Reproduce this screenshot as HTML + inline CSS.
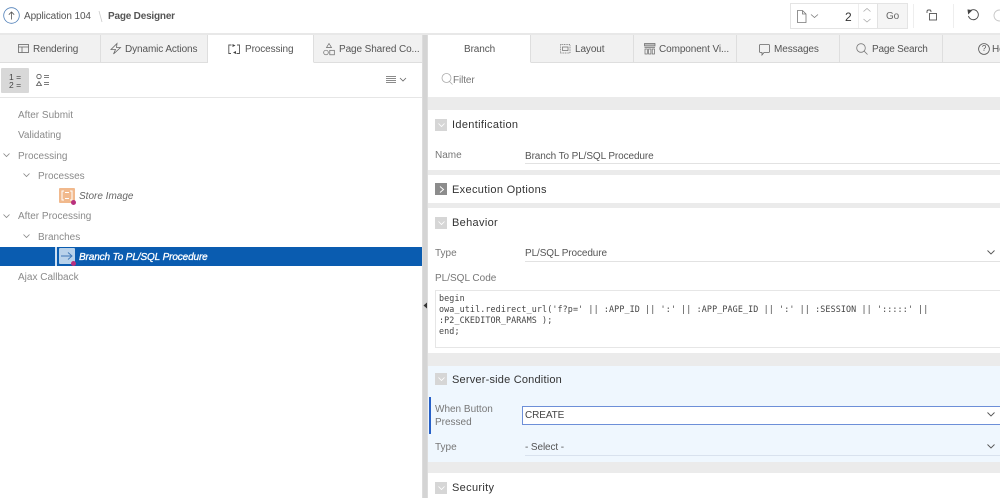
<!DOCTYPE html>
<html><head><meta charset="utf-8"><style>
html,body{margin:0;padding:0;background:#fff;width:1000px;height:498px;overflow:hidden}
#r{position:relative;width:1000px;height:498px;overflow:hidden;font-family:"Liberation Sans",sans-serif;font-size:10px;color:#444;filter:blur(.25px);letter-spacing:-.1px}
.a{position:absolute}
.t{position:absolute;white-space:nowrap;line-height:12px}
.tab{position:absolute;top:35px;height:27px;background:#f1f1f1;border-right:1px solid #dedede;border-bottom:1px solid #dedede}
.w{background:#fff;border-bottom:1px solid #fff}
.g{position:absolute;background:#ebebeb}
.tr{color:#8a8a8a;font-size:10px;letter-spacing:0}
.h{font-size:11px;color:#333;letter-spacing:.33px}
.b{position:absolute;left:435px;width:12px;height:12px;background:#d6d6d6}
.lb{color:#777;letter-spacing:0}
.v{color:#555;letter-spacing:-.1px}
.l{position:absolute;left:525px;width:475px;height:1px;background:#e2e2e2}
svg{position:absolute;overflow:visible;fill:none}
</style></head><body><div id="r">
<!-- header -->
<div class="a" style="left:0;top:33px;width:1000px;height:2px;background:#e8e8e8"></div>
<svg style="left:3px;top:7px" width="17" height="17" stroke="#4f7fb8" stroke-width=".8"><circle cx="8.500" cy="8.500" r="7.800"/><path d="M8.500 12.500V5M5.800 7.700L8.500 5l2.700 2.700" stroke="#555"/></svg>
<div class="t" style="left:24px;top:11px;color:#555">Application 104</div>
<svg style="left:98px;top:10px" width="6" height="13" stroke="#ccc" stroke-width=".8"><path d="M1 1l3 11"/></svg>
<div class="t" style="left:108px;top:11px;color:#555;font-weight:bold;letter-spacing:-.2px">Page Designer</div>
<div class="a" style="left:790px;top:3px;width:116px;height:24px;border:1px solid #e4e4e4;background:#fff"></div>
<div class="a" style="left:858px;top:4px;width:1px;height:24px;background:#eee"></div>
<div class="a" style="left:877px;top:4px;width:1px;height:24px;background:#e2e2e2"></div>
<div class="a" style="left:878px;top:4px;width:29px;height:24px;background:#f5f5f5"></div>
<svg style="left:797px;top:10px" width="24" height="14" stroke="#777" stroke-width=".8"><path d="M.5.500H5.500L9 4V12.500H.5zM5.500.500V4H9"/><path d="M14 4.500L17.500 7.500 21 4.500"/></svg>
<div class="t" style="left:845px;top:11px;font-size:12px;color:#333">2</div>
<svg style="left:862px;top:8px" width="10" height="16" stroke="#aaa" stroke-width=".8"><path d="M1.500 3.500L5 .5 8.500 3.500M1.500 11L5 14 8.500 11"/></svg>
<div class="t" style="left:886px;top:11px;color:#666;font-size:10px">Go</div>
<div class="a" style="left:913px;top:4px;width:1px;height:24px;background:#eee"></div>
<svg style="left:926px;top:9px" width="13" height="13" stroke="#555" stroke-width=".9"><rect x="3.500" y="4.500" width="7" height="6.500"/><path d="M1 4V2.500Q1 1 2.500 1H4Q5 1 5 3"/></svg>
<div class="a" style="left:953px;top:4px;width:1px;height:24px;background:#eee"></div>
<svg style="left:967px;top:9px" width="13" height="13" stroke="#444" stroke-width=".9"><path d="M2.500 2.500A5 5 0 1 1 1.500 7"/><path d="M1 1l3.500.5L1.500 4.500z" fill="#444"/></svg>
<svg style="left:993px;top:9px" width="13" height="13" stroke="#c8c8c8" stroke-width=".9"><circle cx="6.500" cy="6.500" r="5.500"/></svg>
<!-- left tabs -->
<div class="a" style="left:0;top:35px;width:422px;height:28px;background:#f1f1f1"></div>
<div class="tab" style="left:0;width:100px"></div>
<div class="tab" style="left:101px;width:106px"></div>
<div class="tab w" style="left:208px;width:105px;border-right:1px solid #dedede"></div>
<div class="tab" style="left:314px;width:108px;border-right:0"></div>
<svg style="left:18px;top:44px" width="12" height="10" stroke="#666" stroke-width=".8"><rect x=".5" y=".5" width="10" height="8"/><path d="M.5 3H10.500M4 3V8.500"/></svg>
<div class="t" style="left:33px;top:44px;color:#555">Rendering</div>
<svg style="left:110px;top:43px" width="12" height="12" stroke="#666" stroke-width=".8"><path d="M7 .5L1 6.500H5.500L3.500 11 10.500 4.500H6.500z"/></svg>
<div class="t" style="left:125px;top:44px;color:#555">Dynamic Actions</div>
<svg style="left:228px;top:44px" width="13" height="11" stroke="#555" stroke-width=".9"><path d="M3.500 1H.8V9.500H3M8.500 9.500H11.500V1H9"/><path d="M4.500 0L7.500 1.500 4.500 3zM8 7L5 8.500 8 10z" fill="#444" stroke="none"/></svg>
<div class="t" style="left:245px;top:44px;color:#555">Processing</div>
<svg style="left:323px;top:43px" width="12" height="13" stroke="#666" stroke-width=".7"><path d="M6 .5L8.500 4.500H3.500z"/><circle cx="3" cy="9.500" r="2.300"/><rect x="6.800" y="7.300" width="4.500" height="4.500"/></svg>
<div class="t" style="left:339px;top:44px;color:#555">Page Shared Co...</div>
<!-- right tabs -->
<div class="a" style="left:428px;top:35px;width:572px;height:28px;background:#f1f1f1"></div>
<div class="tab w" style="left:428px;width:102px;border-right:1px solid #dedede"></div>
<div class="tab" style="left:531px;width:102px"></div>
<div class="tab" style="left:634px;width:102px"></div>
<div class="tab" style="left:737px;width:102px"></div>
<div class="tab" style="left:840px;width:102px"></div>
<div class="tab" style="left:943px;width:57px;border-right:0"></div>
<div class="t" style="left:464px;top:44px;color:#555">Branch</div>
<svg style="left:560px;top:44px" width="11" height="10" stroke="#666" stroke-width=".7"><rect x=".5" y=".5" width="9.500" height="8.500" stroke-dasharray="1 .7"/><rect x="2.500" y="3" width="5.500" height="3.500"/></svg>
<div class="t" style="left:575px;top:44px;color:#555">Layout</div>
<svg style="left:644px;top:43px" width="12" height="12" stroke="#666" stroke-width=".7"><rect x=".5" y=".5" width="10.500" height="2.500" fill="#bbb"/><path d="M.5 4.500H11"/><rect x="1" y="6" width="2.300" height="5"/><rect x="4.600" y="6" width="2.300" height="5"/><rect x="8.200" y="6" width="2.300" height="5"/></svg>
<div class="t" style="left:659px;top:44px;color:#555">Component Vi...</div>
<svg style="left:759px;top:44px" width="11" height="12" stroke="#666" stroke-width=".8"><path d="M1.500.5H9.500Q10.500.5 10.500 1.500V7.500Q10.500 8.500 9.500 8.500H5L3 11V8.500H1.500Q.5 8.500.5 7.500V1.500Q.5.5 1.500.5z"/></svg>
<div class="t" style="left:774px;top:44px;color:#555">Messages</div>
<svg style="left:856px;top:43px" width="12" height="12" stroke="#777" stroke-width=".8"><circle cx="5" cy="5" r="4.300"/><path d="M8 8l3.500 3.500"/></svg>
<div class="t" style="left:872px;top:44px;color:#555;letter-spacing:-.2px">Page Search</div>
<svg style="left:978px;top:43px" width="12" height="12" stroke="#555" stroke-width=".8"><circle cx="6" cy="6" r="5.400"/></svg>
<div class="t" style="left:981px;top:43px;color:#555;font-size:8px;line-height:12px;width:6px;text-align:center">?</div>
<div class="t" style="left:992px;top:44px;color:#555">Help</div>
<!-- left toolbar -->
<div class="a" style="left:0;top:97px;width:422px;height:1px;background:#e6e6e6"></div>
<div class="a" style="left:1px;top:68px;width:28px;height:25px;background:#d8d8d8;border-radius:1px"></div>
<div class="t" style="left:9px;top:73px;font-size:8.500px;line-height:8px;color:#444;letter-spacing:0">1 =<br>2 =</div>
<svg style="left:36px;top:74px" width="14" height="14" stroke="#555" stroke-width=".8"><circle cx="3" cy="2.500" r="2.200"/><path d="M3 7.500L5.500 11.500H.5zM8 1.500H13M8 3.500H13M8 8.500H13M8 10.500H13"/></svg>
<svg style="left:386px;top:76px" width="22" height="9" stroke="#666" stroke-width=".8"><path d="M0 .5H10M0 2.500H10M0 4.500H10M0 6.500H10"/><path d="M14 2L17 5 20 2"/></svg>
<!-- tree -->
<div class="t tr" style="left:18px;top:110px">After Submit</div>
<div class="t tr" style="left:18px;top:130px">Validating</div>
<svg style="left:3px;top:153px" width="8" height="5" stroke="#888" stroke-width=".8"><path d="M.5.500L3.500 3.500 6.500.500"/></svg>
<div class="t tr" style="left:18px;top:151px">Processing</div>
<svg style="left:23px;top:173px" width="8" height="5" stroke="#888" stroke-width=".8"><path d="M.5.500L3.500 3.500 6.500.500"/></svg>
<div class="t tr" style="left:38px;top:171px">Processes</div>
<div class="a" style="left:59px;top:188px;width:16px;height:15px;background:#f1b98d;border-radius:1px"></div>
<svg style="left:61px;top:190px" width="12" height="11" stroke="#fff" stroke-width="1"><path d="M3 1H1V10H3M9 10H11V1H9M4 2.500H8M4 8.500H8"/></svg>
<div class="a" style="left:71px;top:200px;width:5px;height:5px;background:#b8307e;border-radius:50%"></div>
<div class="t tr" style="left:79px;top:191px;font-style:italic;color:#666">Store Image</div>
<svg style="left:3px;top:214px" width="8" height="5" stroke="#888" stroke-width=".8"><path d="M.5.500L3.500 3.500 6.500.500"/></svg>
<div class="t tr" style="left:18px;top:211px">After Processing</div>
<svg style="left:23px;top:234px" width="8" height="5" stroke="#888" stroke-width=".8"><path d="M.5.500L3.500 3.500 6.500.500"/></svg>
<div class="t tr" style="left:38px;top:232px">Branches</div>
<div class="a" style="left:0;top:247px;width:422px;height:19px;background:#0a5cb0"></div>
<div class="a" style="left:55px;top:247px;width:2px;height:19px;background:#cfe0f2"></div>
<div class="a" style="left:59px;top:248px;width:16px;height:16px;background:#b9d2ea;border-radius:1px"></div>
<svg style="left:60px;top:251px" width="14" height="10" stroke="#3f77b5" stroke-width=".9"><path d="M1 5H12M8 1.500L12 5 8 8.500"/></svg>
<div class="a" style="left:71px;top:261px;width:5px;height:5px;background:#b8307e;border-radius:50%"></div>
<div class="t" style="left:79px;top:252px;font-style:italic;color:#fff;letter-spacing:-.12px;font-size:10px;-webkit-text-stroke:.3px #fff">Branch To PL/SQL Procedure</div>
<div class="t tr" style="left:18px;top:272px">Ajax Callback</div>
<!-- splitter -->
<div class="a" style="left:422px;top:35px;width:6px;height:463px;background:#dcdcdc"></div>
<div class="a" style="left:423px;top:35px;width:4px;height:463px;background:#d4d4d4"></div>
<svg style="left:423px;top:302px" width="5" height="7"><path d="M4 .5L.5 3.500 4 6.500z" fill="#333"/></svg>
<!-- right panel -->
<svg style="left:441px;top:73px" width="13" height="13" stroke="#aaa" stroke-width=".8"><circle cx="5.500" cy="5" r="4.500"/><path d="M8.500 8.500l3 3"/></svg>
<div class="t" style="left:453px;top:75px;color:#777">Filter</div>
<div class="g" style="left:428px;top:97px;width:572px;height:13px"></div>
<div class="g" style="left:428px;top:170px;width:572px;height:5px"></div>
<div class="g" style="left:428px;top:203px;width:572px;height:5px"></div>
<div class="g" style="left:428px;top:353px;width:572px;height:13px"></div>
<div class="a" style="left:428px;top:366px;width:572px;height:96px;background:#eff7fe"></div>
<div class="g" style="left:428px;top:462px;width:572px;height:11px"></div>
<!-- section headers -->
<div class="b" style="top:119px"></div>
<svg style="left:438px;top:123px" width="7" height="5" stroke="#fff" stroke-width=".8"><path d="M.5.500L3.500 3.500 6.500.500"/></svg>
<div class="t h" style="left:452px;top:119px">Identification</div>
<div class="t lb" style="left:435px;top:150px">Name</div>
<div class="t v" style="left:525px;top:151px">Branch To PL/SQL Procedure</div>
<div class="l" style="top:163px"></div>
<div class="b" style="top:183px;background:#8c8c8c"></div>
<svg style="left:439px;top:186px" width="6" height="8" stroke="#fff" stroke-width=".9"><path d="M1 .5L4.500 3.500 1 6.500"/></svg>
<div class="t h" style="left:452px;top:184px">Execution Options</div>
<div class="b" style="top:217px"></div>
<svg style="left:438px;top:221px" width="7" height="5" stroke="#fff" stroke-width=".8"><path d="M.5.500L3.500 3.500 6.500.500"/></svg>
<div class="t h" style="left:452px;top:217px">Behavior</div>
<div class="t lb" style="left:435px;top:248px">Type</div>
<div class="t v" style="left:525px;top:248px">PL/SQL Procedure</div>
<div class="l" style="top:261px"></div>
<svg style="left:987px;top:250px" width="9" height="6" stroke="#555" stroke-width=".9"><path d="M.5.500L4 4 7.500.500"/></svg>
<div class="t lb" style="left:435px;top:273px">PL/SQL Code</div>
<div class="a" style="left:435px;top:290px;width:565px;height:56px;border:1px solid #e6e6e6;border-right:0;background:#fff"></div>
<div class="t" style="left:439px;top:293px;font-family:'DejaVu Sans Mono','Liberation Mono',monospace;font-size:8.400px;line-height:11px;color:#444;letter-spacing:.11px;white-space:pre">begin
owa_util.redirect_url('f?p=' || :APP_ID || ':' || :APP_PAGE_ID || ':' || :SESSION || ':::::' ||
:P2_CKEDITOR_PARAMS );
end;</div>
<div class="b" style="top:373px"></div>
<svg style="left:438px;top:377px" width="7" height="5" stroke="#fff" stroke-width=".8"><path d="M.5.500L3.500 3.500 6.500.500"/></svg>
<div class="t h" style="left:452px;top:374px;letter-spacing:.2px">Server-side Condition</div>
<div class="a" style="left:429px;top:397px;width:2px;height:37px;background:#2660c8"></div>
<div class="t lb" style="left:435px;top:404px;line-height:12.500px">When Button<br>Pressed</div>
<div class="a" style="left:522px;top:406px;width:478px;height:17px;background:#fff;border:1px solid #6d8fd8;border-right:0"></div>
<div class="t v" style="left:525px;top:410px;color:#444">CREATE</div>
<svg style="left:987px;top:412px" width="9" height="6" stroke="#555" stroke-width=".9"><path d="M.5.500L4 4 7.500.500"/></svg>
<div class="t lb" style="left:435px;top:442px">Type</div>
<div class="t v" style="left:525px;top:442px">- Select -</div>
<div class="a" style="left:525px;top:455px;width:475px;height:1px;background:#d9e2ee"></div>
<svg style="left:987px;top:444px" width="9" height="6" stroke="#555" stroke-width=".9"><path d="M.5.500L4 4 7.500.500"/></svg>
<div class="b" style="top:482px"></div>
<svg style="left:438px;top:486px" width="7" height="5" stroke="#fff" stroke-width=".8"><path d="M.5.500L3.500 3.500 6.500.500"/></svg>
<div class="t h" style="left:452px;top:482px">Security</div>
</div></body></html>
